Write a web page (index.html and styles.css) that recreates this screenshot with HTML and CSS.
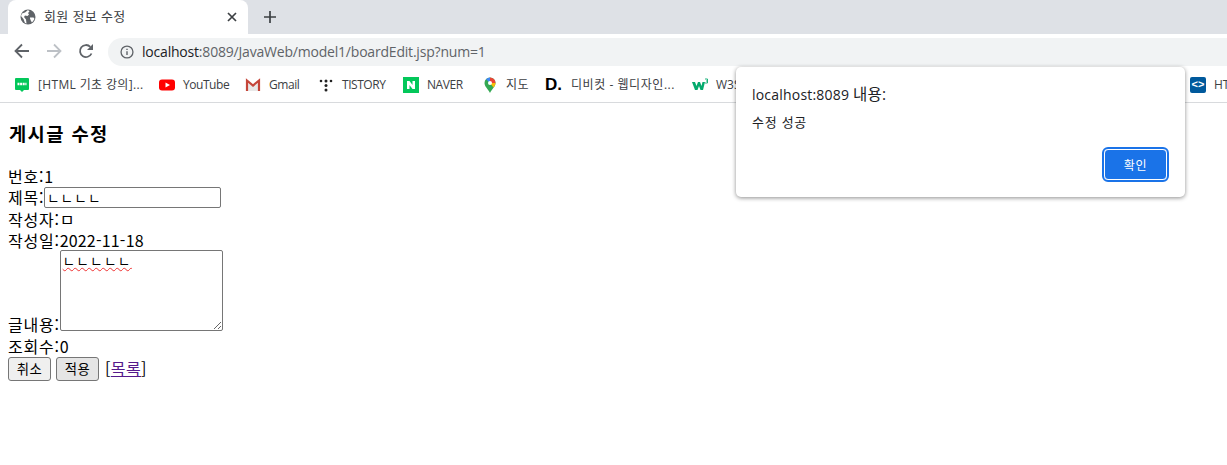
FILE: index.html
```html
<!DOCTYPE html>
<html lang="ko">
<head>
<meta charset="utf-8">
<title>회원 정보 수정</title>
<link rel="stylesheet" href="styles.css">
</head>
<body>
<header class="chrome">
  <div class="tabstrip">
    <div class="tab">
      <svg class="globe" viewBox="0 0 16 16" width="16" height="16"><circle cx="8" cy="8" r="7.5" fill="#5f6368"/><path d="M2 4.5 5 3.500 8 1 9.500 2.500 8 4 9 5.500 7.500 7 5 6.500 4 8 6 10.500 6.500 14.500 5 14 3.500 10 1 7ZM10 8.500h3.500l1 1.500-2.500 3.500-1-1.500-1-2.500Z" fill="#fff"/></svg>
      <span class="tab-title">회원 정보 수정</span>
      <svg class="tab-close" viewBox="0 0 10 10" width="10" height="10"><path d="M1 1 9 9M9 1 1 9" stroke="#3c4043" stroke-width="1.7" fill="none"/></svg>
    </div>
    <svg class="new-tab" viewBox="0 0 12 12" width="12" height="12"><path d="M6 0v12M0 6h12" stroke="#3c4043" stroke-width="1.7" fill="none"/></svg>
  </div>
  <div class="toolbar">
    <svg class="nav" viewBox="0 0 16 16" width="16" height="16"><path d="M15 8H2M8 1.500 1.500 8 8 14.500" stroke="#5f6368" stroke-width="1.8" fill="none"/></svg>
    <svg class="nav" viewBox="0 0 16 16" width="16" height="16"><path d="M1 8h13M8 1.500 14.500 8 8 14.500" stroke="#bdc1c6" stroke-width="1.8" fill="none"/></svg>
    <svg class="nav" viewBox="0 0 16 16" width="16" height="16"><path d="M13.500 10.500A6 6 0 1 1 12.300 3.800" stroke="#5f6368" stroke-width="1.800" fill="none"/><path d="M15 1v6H9Z" fill="#5f6368"/></svg>
    <div class="omnibox">
      <svg viewBox="0 0 16 16" width="14" height="14"><circle cx="8" cy="8" r="6.800" stroke="#5f6368" stroke-width="1.500" fill="none"/><path d="M8 7v4.500M8 4.300v1.500" stroke="#5f6368" stroke-width="1.600"/></svg>
      <span class="url"><span class="host">localhost</span>:8089/JavaWeb/model1/boardEdit.jsp?num=1</span>
    </div>
  </div>
  <nav class="bookmarks">
    <a class="bm w1"><svg viewBox="0 0 16 16" width="16" height="16"><path d="M1 2q0-1 1-1h12q1 0 1 1v10q0 1-1 1h-4l-2 2-2-2H2q-1 0-1-1Z" fill="#03c75a"/><path d="M3.500 7h9" stroke="#fff" stroke-width="2.500" stroke-dasharray="2 .6"/></svg><span class="ko">[HTML 기초 강의]...</span></a>
    <a class="bm w2"><svg viewBox="0 0 16 16" width="16" height="16"><rect y="2.500" width="16" height="11" rx="3" fill="#f00"/><path d="M6.500 5.500v5L11 8Z" fill="#fff"/></svg><span class="en">YouTube</span></a>
    <a class="bm w3"><svg viewBox="0 0 16 16" width="16" height="16"><path d="M3 4l5 4 5-4v10H3Z" fill="#e8e8e8"/><path d="M2 14V3.500l6 5 6-5V14" stroke="#c5463a" stroke-width="2.200" fill="none"/></svg><span class="en">Gmail</span></a>
    <a class="bm w4"><svg viewBox="0 0 16 16" width="16" height="16"><g fill="#222"><circle cx="3" cy="4" r="1.300"/><circle cx="8" cy="4" r="1.500"/><circle cx="13" cy="4" r="1.300"/><circle cx="8" cy="8.500" r="1.500"/><circle cx="8" cy="13" r="1.500"/></g></svg><span class="en">TISTORY</span></a>
    <a class="bm w5"><svg viewBox="0 0 16 16" width="16" height="16"><rect width="16" height="16" fill="#03c75a"/><path d="M4 12V4h2.500l3 4V4H12v8H9.500l-3-4v4Z" fill="#fff"/></svg><span class="en">NAVER</span></a>
    <a class="bm w6"><svg viewBox="0 0 16 16" width="16" height="16"><path d="M8 16C6 12 2.500 9.500 2.500 6a5.500 5.500 0 0 1 11 0C13.500 9.500 10 12 8 16Z" fill="#34a853"/><path d="M4 2.200A5.500 5.500 0 0 1 8 .5V6Z" fill="#4285f4"/><path d="M8 .5A5.500 5.500 0 0 1 13.500 6H8Z" fill="#ea4335"/><path d="M13.500 6c0 1.500-1 3-2 4.500L8 6Z" fill="#fbbc04"/><circle cx="8" cy="6" r="2" fill="#fff"/></svg><span class="ko">지도</span></a>
    <a class="bm w7"><span class="dlogo">D.</span><span class="ko">디비컷 - 웹디자인...</span></a>
    <a class="bm w8"><svg viewBox="0 0 16 16" width="16" height="16"><path d="M0 5h3l1.500 4L6 5h2l1.500 4 1-4h2.500L11 13H8.500L7 9l-1.500 4H3Z" fill="#04aa6d"/><path d="M13 2h2.500v4H13M14 4h1.500" stroke="#04aa6d" stroke-width=".9" fill="none"/></svg><span>W3S</span></a>
    <a class="bm w9"><span class="code-logo">&lt;&gt;</span><span>HT</span></a>
  </nav>
</header>

<main class="page">
  <h3 class="heading">게시글 수정</h3>
  <form class="edit-form">
    <div class="row"><span class="lbl">번호:</span><span class="val">1</span></div>
    <div class="row"><span class="lbl">제목:</span><input class="title-input" type="text" value="ㄴㄴㄴㄴ"></div>
    <div class="row"><span class="lbl">작성자:</span><span class="val">ㅁ</span></div>
    <div class="row"><span class="lbl">작성일:</span><span class="val">2022-11-18</span></div>
    <div class="row content-row"><span class="lbl">글내용:</span><textarea class="content-input" rows="5" cols="20">ㄴㄴㄴㄴㄴ</textarea></div>
    <div class="row"><span class="lbl">조회수:</span><span class="val">0</span></div>
    <div class="actions"><button type="button" class="btn">취소</button><button type="button" class="btn btn-hover">적용</button><a class="list-link">[<span class="link">목록</span>]</a></div>
  </form>
</main>

<div class="dialog" role="alertdialog">
  <div class="dialog-title">localhost:8089 <span class="dialog-ko">내용:</span></div>
  <div class="dialog-msg">수정 성공</div>
  <div class="dialog-actions"><button type="button" class="ok">확인</button></div>
</div>
</body>
</html>
```
FILE: styles.css
```css
* { box-sizing: border-box; }
html, body { margin: 0; height: 100%; overflow: hidden; background: #fff; }
body { width: 1227px; height: 465px; font-family: "Noto Sans CJK KR", "Noto Sans", sans-serif; color: #000; }

.chrome { font-family: "Open Sans", "Noto Sans CJK KR", sans-serif; }
.tabstrip { height: 34px; background: #dee1e6; display: flex; align-items: flex-end; padding-left: 8px; position: relative; }
.tab { width: 240px; height: 34px; background: #fff; border-radius: 8px 8px 0 0; display: flex; align-items: center; padding: 0 12px; }
.globe { flex: none; margin-right: 8px; }
.tab-title { font: 13px/16px "Noto Sans CJK KR", sans-serif; letter-spacing: .3px; color: #3c4043; flex: 1; margin-bottom: 3px; }
.tab-close { flex: none; margin-right: -1px; }
.new-tab { position: absolute; left: 264px; top: 11px; }

.toolbar { height: 33px; background: #fff; display: flex; align-items: center; padding-left: 14px; }
.nav { flex: none; margin-right: 16px; }
.omnibox { flex: 1; height: 28px; margin-left: -2px; margin-top: 3px; background: #f1f3f4; border-radius: 14px 0 0 14px; display: flex; align-items: center; padding-left: 12px; gap: 8px; }
.url { font: 14px/18px "Open Sans", "Noto Sans", sans-serif; letter-spacing: -.2px; color: #5f6368; white-space: nowrap; }
.host { color: #202124; }

.bookmarks { height: 36px; background: #fff; border-bottom: 1px solid #d8dadd; display: flex; align-items: center; padding-left: 14px; font: 12px/16px "Open Sans", "Noto Sans CJK KR", sans-serif; color: #3c4043; white-space: nowrap; }
.bm { display: flex; align-items: center; gap: 8px; flex: none; }
.bm svg { flex: none; }
.ko { letter-spacing: .35px; }
.en { letter-spacing: -.45px; }
.w1 { width: 145px; }
.w2 { width: 86px; }
.w3 { width: 73px; }
.w4 { width: 85px; }
.w5 { width: 79px; }
.w6 { width: 63px; }
.w7 { width: 147px; }
.w8 { width: 498px; }
.w7 .ko { letter-spacing: .55px; margin-left: 2px; }
.dlogo { font: 700 17px/16px "Liberation Sans", sans-serif; color: #000; width: 16px; }
.code-logo { width: 16px; height: 16px; background: #00599c; color: #fff; border-radius: 2px; font: 700 11px/15px "Liberation Sans", sans-serif; text-align: center; }

.page { padding: 0 8px; font-size: 16px; line-height: 21.33px; }
.heading { margin: 17px 0 21px 1px; font-size: 18.72px; line-height: 25px; font-weight: 700; letter-spacing: 1.4px; }
.row { height: 21.33px; white-space: nowrap; }
.lbl { letter-spacing: .75px; }
.val { letter-spacing: .2px; }
.title-input { width: 177px; height: 21px; padding: 1px 2px; border: 1px solid #767676; border-radius: 2px; font: 13.33px/17px "Noto Sans CJK KR", sans-serif; letter-spacing: 1.4px; vertical-align: 1px; margin: 0; }
.content-row { height: 84.33px; }
.content-input { width: 163px; height: 81px; padding: 2px; border: 1px solid #767676; border-radius: 2px; font: 13.33px/15px "Noto Sans CJK KR", sans-serif; letter-spacing: 1.6px; vertical-align: 0; margin: -1px 0 0; text-decoration: underline wavy #e33 1px; }
.actions { display: flex; align-items: center; gap: 5px; height: 24px; }
.btn { width: 43px; height: 24px; padding: 0; margin: 0; font: 13.33px/17px "Noto Sans CJK KR", sans-serif; letter-spacing: .5px; background: #efefef; border: 1px solid #767676; border-radius: 3px; color: #000; }
.btn-hover { background: #e5e5e5; }
.list-link { margin-left: 1px; letter-spacing: .4px; }
.link { color: #551a8b; text-decoration: underline; }

.dialog { position: absolute; left: 736px; top: 67px; width: 449px; height: 130px; background: #fff; border-radius: 5px; box-shadow: 0 1px 4px rgba(0,0,0,.45); padding: 17px 16px 0; }
.dialog-title { font: 14px/20px "Open Sans", "Noto Sans CJK KR", sans-serif; letter-spacing: .2px; color: #202124; }
.dialog-ko { font-size: 15.5px; }
.dialog-msg { margin-top: 9px; font: 13px/16px "Noto Sans CJK KR", sans-serif; letter-spacing: .7px; color: #202124; }
.dialog-actions { display: flex; justify-content: flex-end; margin-top: 19px; }
.ok { width: 63px; height: 31px; background: #1a73e8; color: #fff; border: 1px solid #fff; outline: 2px solid #1a73e8; border-radius: 4px; font: 12px/16px "Noto Sans CJK KR", sans-serif; letter-spacing: .8px; padding: 0; margin-right: 2px; }
```
